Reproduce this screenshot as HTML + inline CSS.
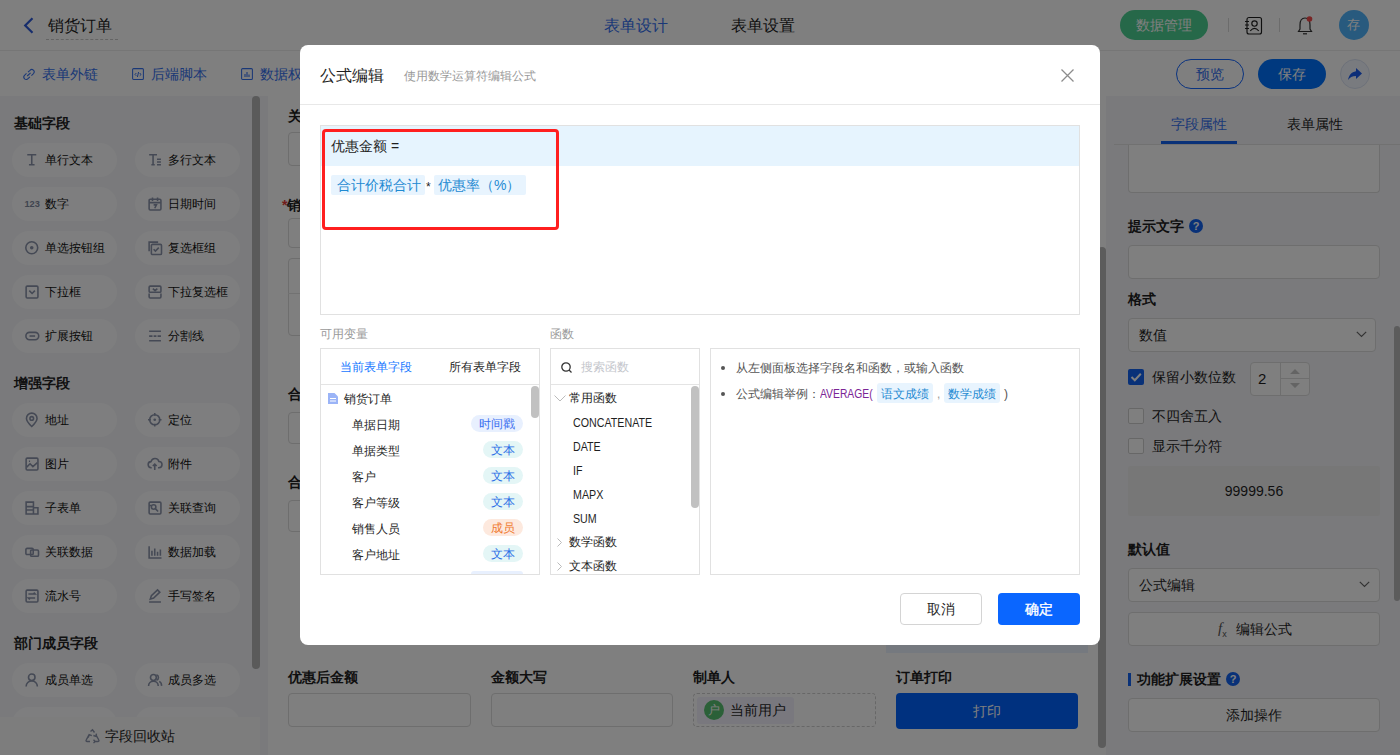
<!DOCTYPE html>
<html><head><meta charset="utf-8">
<style>
*{box-sizing:border-box;margin:0;padding:0}
html,body{width:1400px;height:755px;overflow:hidden}
body{position:relative;font-family:"Liberation Sans",sans-serif;color:#1f1f1f;background:#fff}
.a{position:absolute}
.t{position:absolute;white-space:nowrap}
svg{position:absolute;overflow:visible}
/* background page */
#hdr{left:0;top:0;width:1400px;height:51px;background:#fff;border-bottom:1px solid #ececec}
#tb{left:0;top:51px;width:1400px;height:45px;background:#fff}
#lp{left:0;top:96px;width:268px;height:659px;background:#f4f5f9}
#cv{left:268px;top:96px;width:838px;height:659px;background:#fff}
#rp{left:1106px;top:96px;width:294px;height:659px;background:#f4f5f9}
.pill{position:absolute;width:105px;height:34px;border-radius:17px;background:#fdfdfe}
.pill span{position:absolute;left:33px;top:0;line-height:34px;font-size:12px;color:#111;white-space:nowrap}
.sec{position:absolute;left:14px;font-size:14px;font-weight:bold;color:#222;line-height:20px}
.inp{position:absolute;border:1px solid #dcdcdc;border-radius:4px;background:#fff}
.lbl{position:absolute;font-size:14px;font-weight:bold;color:#1f1f1f;line-height:20px;white-space:nowrap}
#ov{left:0;top:0;width:1400px;height:755px;background:rgba(0,0,0,.5)}
/* modal */
#md{left:300px;top:45px;width:800px;height:600px;background:#fff;border-radius:8px}
.box{position:absolute;border:1px solid #e1e1e1;background:#fff}
.tag{position:absolute;height:17px;line-height:19px;border-radius:9px;font-size:12px;text-align:center}
.fn{transform:scaleX(.89);transform-origin:0 0}
.fr{position:absolute;font-size:12px;color:#1f1f1f;line-height:20px;white-space:nowrap}
</style></head><body>

<!-- ===== BACKGROUND ===== -->
<div id="hdr" class="a"></div>
<svg style="left:23px;top:17px" width="11" height="17" viewBox="0 0 11 17"><path d="M9.5 1.2 L2.2 8.5 L9.5 15.8" fill="none" stroke="#2f5bd8" stroke-width="2.2"/></svg>
<div class="t" style="left:48px;top:15px;font-size:16px;line-height:22px;color:#1f1f1f">销货订单</div>
<div class="a" style="left:46px;top:39px;width:72px;border-top:1px dashed #c8c8c8"></div>
<div class="t" style="left:604px;top:15px;font-size:16px;line-height:22px;color:#3570ee">表单设计</div>
<div class="t" style="left:731px;top:15px;font-size:16px;line-height:22px;color:#1f1f1f">表单设置</div>
<div class="a" style="left:1120px;top:10px;width:88px;height:30px;border-radius:15px;background:#4cd092"></div>
<div class="t" style="left:1136px;top:15px;font-size:14px;line-height:20px;color:#fff">数据管理</div>
<div class="a" style="left:1228px;top:18px;width:1px;height:14px;background:#d8d8d8"></div>
<svg style="left:1244px;top:16px" width="20" height="20" viewBox="0 0 20 20"><rect x="3" y="1.5" width="14.5" height="16.5" rx="2" fill="none" stroke="#1f1f1f" stroke-width="1.15"/><circle cx="10.5" cy="7.5" r="2.7" fill="none" stroke="#1f1f1f" stroke-width="1.15"/><path d="M6.2 15 Q10.5 9.8 14.8 15" fill="none" stroke="#1f1f1f" stroke-width="1.15"/><path d="M1 5.5h4M1 9h4M1 12.5h4" stroke="#1f1f1f" stroke-width="1.1"/></svg>
<div class="a" style="left:1279px;top:18px;width:1px;height:14px;background:#d8d8d8"></div>
<svg style="left:1297px;top:16px" width="17" height="19" viewBox="0 0 17 19"><path d="M8 2 C4 2 3 5 3 9 L3 13 L1.5 15.5 L14.5 15.5 L13 13 L13 9 C13 5 12 2 8 2Z" fill="none" stroke="#333" stroke-width="1.2"/><path d="M6 17.8h4" stroke="#333" stroke-width="1.2"/><circle cx="12.5" cy="3" r="2.8" fill="#f24a4a"/></svg>
<div class="a" style="left:1339px;top:10px;width:30px;height:30px;border-radius:15px;background:#50b4fc"></div>
<div class="t" style="left:1347px;top:15px;font-size:13px;line-height:20px;color:#fff">存</div>
<div id="tb" class="a"></div>
<svg style="left:23px;top:69px" width="12" height="11" viewBox="0 0 12 11"><path d="M5 3.2 L7 1.3 A2.3 2.3 0 0 1 10.5 4.6 L8.4 6.6 M6.9 7.8 L5 9.7 A2.3 2.3 0 0 1 1.5 6.4 L3.5 4.4 M4.2 7 L7.6 3.8" fill="none" stroke="#3570ee" stroke-width="1.05"/></svg>
<div class="t" style="left:42px;top:64px;font-size:14px;line-height:20px;color:#3570ee">表单外链</div>
<svg style="left:132px;top:68px" width="12" height="12" viewBox="0 0 12 12"><rect x="0.6" y="0.6" width="10.8" height="10.8" rx="1" fill="none" stroke="#3570ee" stroke-width="1.05"/><path d="M3 6.5 L4.3 5 M3 6.5 L4.3 7.8 M9 6.5 L7.7 5 M9 6.5 L7.7 7.8 M6.6 4 L5.4 9" fill="none" stroke="#3570ee" stroke-width="1"/></svg>
<div class="t" style="left:151px;top:64px;font-size:14px;line-height:20px;color:#3570ee">后端脚本</div>
<svg style="left:241px;top:68px" width="12" height="12" viewBox="0 0 12 12"><rect x="0.6" y="0.6" width="10.8" height="10.8" rx="1" fill="none" stroke="#3570ee" stroke-width="1.05"/><path d="M4 9V6M6 9V4M8 9V6.5" fill="none" stroke="#3570ee" stroke-width="1.1"/></svg>
<div class="t" style="left:260px;top:64px;font-size:14px;line-height:20px;color:#3570ee">数据权限</div>
<div class="a" style="left:1176px;top:59px;width:68px;height:30px;border-radius:15px;border:1.5px solid #1466ff;background:#fff"></div>
<div class="t" style="left:1196px;top:64px;font-size:14px;line-height:20px;color:#3570ee">预览</div>
<div class="a" style="left:1258px;top:59px;width:68px;height:30px;border-radius:15px;background:#0072ff"></div>
<div class="t" style="left:1278px;top:64px;font-size:14px;line-height:20px;color:#fff">保存</div>
<div class="a" style="left:1340px;top:59px;width:30px;height:30px;border-radius:15px;background:#f2f6ff;border:1px solid #dbe3f3"></div>
<svg style="left:1347px;top:66px" width="16" height="16" viewBox="0 0 16 16"><path d="M9 2 L15 7.5 L9 13 L9 10 C5 10 3 11.5 1 14 C2 9 4.5 6 9 5.2Z" fill="#1a5cf0"/></svg>
<div id="lp" class="a"></div>
<!--LEFT-->
<div class="sec" style="top:113px">基础字段</div>
<div class="pill" style="left:12px;top:143px"><svg style="left:13px;top:10px" width="13.5" height="13.5" viewBox="0 0 12 12"><path d="M2 1.5h8M6 1.5v9M3.5 10.5h5" stroke="#8a93aa" fill="none" stroke-width="1.4"/></svg><span>单行文本</span></div>
<div class="pill" style="left:135px;top:143px"><svg style="left:13px;top:10px" width="13.5" height="13.5" viewBox="0 0 12 12"><path d="M1 1.5h7M4.5 1.5v9M3 10.5h3M8 5.5h3.5M8 8h3.5M8 10.5h3.5" stroke="#8a93aa" fill="none" stroke-width="1.4"/></svg><span>多行文本</span></div>
<div class="pill" style="left:12px;top:187px"><svg style="left:13px;top:10px" width="13.5" height="13.5" viewBox="0 0 12 12"><text x="-0.5" y="9.2" font-size="8.2" font-weight="bold" fill="#7f889f" font-family="Liberation Sans">123</text></svg><span>数字</span></div>
<div class="pill" style="left:135px;top:187px"><svg style="left:13px;top:10px" width="13.5" height="13.5" viewBox="0 0 12 12"><rect x="1" y="2" width="10.5" height="9.5" rx="1" stroke="#8a93aa" fill="none" stroke-width="1.4"/><path d="M1 5h10.5M4 0.5v3M8.5 0.5v3M5 7h2.5L6 10" stroke="#8a93aa" fill="none" stroke-width="1.4"/></svg><span>日期时间</span></div>
<div class="pill" style="left:12px;top:231px"><svg style="left:13px;top:10px" width="13.5" height="13.5" viewBox="0 0 12 12"><circle cx="6" cy="6" r="5.3" stroke="#8a93aa" fill="none" stroke-width="1.4"/><circle cx="6" cy="6" r="1.6" fill="#8a93aa"/></svg><span>单选按钮组</span></div>
<div class="pill" style="left:135px;top:231px"><svg style="left:13px;top:10px" width="13.5" height="13.5" viewBox="0 0 12 12"><path d="M1 9V1h8" stroke="#8a93aa" fill="none" stroke-width="1.4"/><rect x="3" y="3" width="9" height="9" rx="1" stroke="#8a93aa" fill="none" stroke-width="1.4"/><path d="M5 7.3l1.6 1.6 3-3" stroke="#8a93aa" fill="none" stroke-width="1.4"/></svg><span>复选框组</span></div>
<div class="pill" style="left:12px;top:275px"><svg style="left:13px;top:10px" width="13.5" height="13.5" viewBox="0 0 12 12"><rect x="1" y="1" width="10.5" height="10.5" rx="1" stroke="#8a93aa" fill="none" stroke-width="1.4"/><path d="M3.8 5l2.5 2.5 2.5-2.5" stroke="#8a93aa" fill="none" stroke-width="1.4"/></svg><span>下拉框</span></div>
<div class="pill" style="left:135px;top:275px"><svg style="left:13px;top:10px" width="13.5" height="13.5" viewBox="0 0 12 12"><rect x="1" y="1" width="10.5" height="5.5" rx="1" stroke="#8a93aa" fill="none" stroke-width="1.4"/><path d="M1 7.5v3a1 1 0 0 0 1 1h8.5a1 1 0 0 0 1-1v-3M4.3 3.3l2 1.7 2-1.7" stroke="#8a93aa" fill="none" stroke-width="1.4"/></svg><span>下拉复选框</span></div>
<div class="pill" style="left:12px;top:319px"><svg style="left:13px;top:10px" width="13.5" height="13.5" viewBox="0 0 12 12"><rect x="0.8" y="3" width="11.4" height="6.5" rx="3.2" stroke="#8a93aa" fill="none" stroke-width="1.4"/><path d="M4 6.25h5" stroke="#8a93aa" fill="none" stroke-width="1.4"/></svg><span>扩展按钮</span></div>
<div class="pill" style="left:135px;top:319px"><svg style="left:13px;top:10px" width="13.5" height="13.5" viewBox="0 0 12 12"><path d="M1 2h10.5M1 6.3h3M5 6.3h2.5M8.5 6.3h3M1 10.5h10.5" stroke="#8a93aa" fill="none" stroke-width="1.4"/></svg><span>分割线</span></div>
<div class="sec" style="top:373px">增强字段</div>
<div class="pill" style="left:12px;top:403px"><svg style="left:13px;top:10px" width="13.5" height="13.5" viewBox="0 0 12 12"><path d="M6 12C2.5 8.5 1.3 6.5 1.3 4.8a4.7 4.7 0 0 1 9.4 0c0 1.7-1.2 3.7-4.7 7.2Z" stroke="#8a93aa" fill="none" stroke-width="1.4"/><circle cx="6" cy="4.8" r="1.6" stroke="#8a93aa" fill="none" stroke-width="1.4"/></svg><span>地址</span></div>
<div class="pill" style="left:135px;top:403px"><svg style="left:13px;top:10px" width="13.5" height="13.5" viewBox="0 0 12 12"><circle cx="6" cy="6" r="4.5" stroke="#8a93aa" fill="none" stroke-width="1.4"/><circle cx="6" cy="6" r="1.2" fill="#8a93aa"/><path d="M6 0v2.5M6 9.5V12M0 6h2.5M9.5 6H12" stroke="#8a93aa" fill="none" stroke-width="1.4"/></svg><span>定位</span></div>
<div class="pill" style="left:12px;top:447px"><svg style="left:13px;top:10px" width="13.5" height="13.5" viewBox="0 0 12 12"><rect x="1" y="1" width="10.5" height="10.5" rx="1" stroke="#8a93aa" fill="none" stroke-width="1.4"/><path d="M1.5 9l3-3 2.5 2.5L11 5M3.5 3.8h1" stroke="#8a93aa" fill="none" stroke-width="1.4"/></svg><span>图片</span></div>
<div class="pill" style="left:135px;top:447px"><svg style="left:13px;top:10px" width="13.5" height="13.5" viewBox="0 0 12 12"><path d="M3.3 9.5H3a2.7 2.7 0 0 1-.3-5.4A3.6 3.6 0 0 1 9.7 4a2.7 2.7 0 0 1 0 5.5h-.8M6 11.5V6.5M4.3 8 6 6.3 7.7 8" stroke="#8a93aa" fill="none" stroke-width="1.4"/></svg><span>附件</span></div>
<div class="pill" style="left:12px;top:491px"><svg style="left:13px;top:10px" width="13.5" height="13.5" viewBox="0 0 12 12"><path d="M1 1h6.5v10.5H1ZM1 5h6.5M1 8h6.5M7.5 6h4v5.5h-4" stroke="#8a93aa" fill="none" stroke-width="1.4"/></svg><span>子表单</span></div>
<div class="pill" style="left:135px;top:491px"><svg style="left:13px;top:10px" width="13.5" height="13.5" viewBox="0 0 12 12"><rect x="1" y="1" width="10.5" height="10.5" rx="1" stroke="#8a93aa" fill="none" stroke-width="1.4"/><circle cx="5" cy="5.3" r="2" stroke="#8a93aa" fill="none" stroke-width="1.4"/><path d="M6.5 6.8 9 9.3M1 4h2" stroke="#8a93aa" fill="none" stroke-width="1.4"/></svg><span>关联查询</span></div>
<div class="pill" style="left:12px;top:535px"><svg style="left:13px;top:10px" width="13.5" height="13.5" viewBox="0 0 12 12"><rect x="0.8" y="3" width="6.5" height="5.5" rx="1" stroke="#8a93aa" fill="none" stroke-width="1.4"/><rect x="5" y="4.5" width="7" height="5.5" rx="1" stroke="#8a93aa" fill="none" stroke-width="1.4"/></svg><span>关联数据</span></div>
<div class="pill" style="left:135px;top:535px"><svg style="left:13px;top:10px" width="13.5" height="13.5" viewBox="0 0 12 12"><path d="M1 1v10.5h11M3.5 9.5V5M6 9.5V3M8.5 9.5V6M11 9.5V4" stroke="#8a93aa" fill="none" stroke-width="1.4"/></svg><span>数据加载</span></div>
<div class="pill" style="left:12px;top:579px"><svg style="left:13px;top:10px" width="13.5" height="13.5" viewBox="0 0 12 12"><rect x="1" y="1" width="10.5" height="10.5" rx="1" stroke="#8a93aa" fill="none" stroke-width="1.4"/><path d="M3 4.5h6l-1.3-1.3M9 8H3l1.3 1.3" stroke="#8a93aa" fill="none" stroke-width="1.4"/></svg><span>流水号</span></div>
<div class="pill" style="left:135px;top:579px"><svg style="left:13px;top:10px" width="13.5" height="13.5" viewBox="0 0 12 12"><path d="M2 9l1-3L8.5 0.8l2 2L5 8Z M1 11.5h10.5" stroke="#8a93aa" fill="none" stroke-width="1.4"/></svg><span>手写签名</span></div>
<div class="sec" style="top:633px">部门成员字段</div>
<div class="pill" style="left:12px;top:663px"><svg style="left:13px;top:10px" width="13.5" height="13.5" viewBox="0 0 12 12"><circle cx="6" cy="3.8" r="2.9" stroke="#8a93aa" fill="none" stroke-width="1.4"/><path d="M1 12a5 5 0 0 1 10 0" stroke="#8a93aa" fill="none" stroke-width="1.4"/></svg><span>成员单选</span></div>
<div class="pill" style="left:135px;top:663px"><svg style="left:13px;top:10px" width="13.5" height="13.5" viewBox="0 0 12 12"><circle cx="4.8" cy="4" r="2.6" stroke="#8a93aa" fill="none" stroke-width="1.4"/><path d="M0.5 11.5a4.3 4.3 0 0 1 8.6 0M7.5 1.6a2.5 2.5 0 0 1 0 4.8M10 7.5a4 4 0 0 1 2 4" stroke="#8a93aa" fill="none" stroke-width="1.4"/></svg><span>成员多选</span></div>
<div class="pill" style="left:12px;top:707px"><span></span></div>
<div class="pill" style="left:135px;top:707px"><span></span></div>
<div class="a" style="left:252px;top:96px;width:8px;height:573px;border-radius:4px;background:#b4b4b4"></div>
<div class="a" style="left:0;top:717px;width:260px;height:38px;background:#fafafa"></div>
<svg style="left:85px;top:729px" width="15" height="14" viewBox="0 0 15 14"><path d="M5.5 2.5 7.5 0.8 9.5 3.5M10.8 5.5 13.8 11a1 1 0 0 1-.9 1.5H9.5M5 12.5H2.1a1 1 0 0 1-.9-1.5L4 5.8M3.2 8.5l1-2.8 2.6 1M8.5 10.8l1.7 1.7-1.7 1.5M11.5 4.6l-.6 2.7-2.5-.8" stroke="#8a93aa" fill="none" stroke-width="1.4"/></svg>
<div class="t" style="left:105px;top:726px;font-size:14px;line-height:20px;color:#1f1f1f">字段回收站</div>
<!--/LEFT-->
<div id="cv" class="a"></div>
<!--CANVAS-->
<div class="lbl" style="left:288px;top:106px">关联字段</div>
<div class="inp" style="left:288px;top:132px;width:300px;height:34px"></div>
<div class="lbl" style="left:282px;top:195px"><span style="color:#e53935">*</span>销售类型</div>
<div class="inp" style="left:288px;top:218px;width:300px;height:30px"></div>
<div class="inp" style="left:288px;top:258px;width:300px;height:78px"></div>
<div class="a" style="left:288px;top:293px;width:300px;height:1px;background:#e4e4e4"></div>
<div class="lbl" style="left:288px;top:384px">合计金额</div>
<div class="inp" style="left:288px;top:412px;width:300px;height:32px"></div>
<div class="lbl" style="left:288px;top:472px">合计税额</div>
<div class="inp" style="left:288px;top:500px;width:300px;height:32px"></div>
<div class="a" style="left:886px;top:560px;width:202px;height:93px;background:#eaf3ff"></div>
<div class="lbl" style="left:288px;top:667px">优惠后金额</div>
<div class="inp" style="left:288px;top:693px;width:183px;height:34px"></div>
<div class="lbl" style="left:491px;top:667px">金额大写</div>
<div class="inp" style="left:491px;top:693px;width:182px;height:34px"></div>
<div class="lbl" style="left:693px;top:667px">制单人</div>
<div class="a" style="left:693px;top:693px;width:183px;height:34px;border:1px dashed #cfcfcf;border-radius:4px"></div>
<div class="a" style="left:697px;top:697px;width:97px;height:27px;background:#f3f1fc;border-radius:3px"></div>
<div class="a" style="left:704px;top:700px;width:20px;height:20px;border-radius:10px;background:#56c070"></div>
<div class="t" style="left:708px;top:701px;font-size:12px;line-height:18px;color:#fff">户</div>
<div class="t" style="left:730px;top:700px;font-size:14px;line-height:20px;color:#1f1f1f">当前用户</div>
<div class="lbl" style="left:896px;top:667px">订单打印</div>
<div class="a" style="left:896px;top:693px;width:182px;height:36px;border-radius:4px;background:#0062fe"></div>
<div class="t" style="left:973px;top:701px;font-size:14px;line-height:20px;color:#fff">打印</div>
<div class="a" style="left:1098px;top:247px;width:8px;height:501px;border-radius:4px;background:#b8b8b8"></div>
<div id="rp" class="a"></div>
<!--RIGHT-->
<div class="inp" style="left:1128px;top:130px;width:252px;height:63px;border-top:none;border-radius:0 0 4px 4px"></div>
<div class="a" style="left:1106px;top:96px;width:294px;height:48px;background:#f4f5f9"></div>
<div class="a" style="left:1114px;top:144px;width:286px;height:1px;background:#e3e3e3"></div>
<div class="a" style="left:1161px;top:141px;width:76px;height:3px;background:#1262f0"></div>
<div class="t" style="left:1171px;top:114px;font-size:14px;line-height:20px;color:#3570ee">字段属性</div>
<div class="t" style="left:1287px;top:114px;font-size:14px;line-height:20px;color:#1f1f1f">表单属性</div>
<div class="lbl" style="left:1128px;top:216px">提示文字</div>
<div class="a" style="left:1189px;top:219px;width:14px;height:14px;border-radius:7px;background:#1262f0;color:#fff;font-size:11px;font-weight:bold;line-height:14px;text-align:center">?</div>
<div class="inp" style="left:1128px;top:245px;width:252px;height:34px"></div>
<div class="lbl" style="left:1128px;top:289px">格式</div>
<div class="inp" style="left:1128px;top:318px;width:248px;height:34px"></div>
<div class="t" style="left:1139px;top:325px;font-size:14px;line-height:20px;color:#1f1f1f">数值</div>
<svg style="left:1356px;top:331px" width="11" height="7" viewBox="0 0 11 7"><path d="M0.8 0.8 5.5 5.5 10.2 0.8" fill="none" stroke="#666" stroke-width="1.2"/></svg>
<div class="a" style="left:1128px;top:369px;width:16px;height:16px;border-radius:2px;background:#1262f0"></div>
<svg style="left:1128px;top:369px" width="16" height="16" viewBox="0 0 16 16"><path d="M3.5 8 6.8 11.2 12.8 4.8" fill="none" stroke="#fff" stroke-width="2"/></svg>
<div class="t" style="left:1152px;top:367px;font-size:14px;line-height:20px;color:#1f1f1f">保留小数位数</div>
<div class="inp" style="left:1250px;top:362px;width:60px;height:34px"></div>
<div class="a" style="left:1280px;top:363px;width:1px;height:32px;background:#dcdcdc"></div>
<div class="a" style="left:1281px;top:378px;width:28px;height:1px;background:#dcdcdc"></div>
<svg style="left:1288px;top:366px" width="14" height="26" viewBox="0 0 14 26"><path d="M2 8 7 3 12 8Z M2 17 7 22 12 17Z" fill="#c8c8c8"/></svg>
<div class="t" style="left:1258px;top:369px;font-size:15px;line-height:20px;color:#1f1f1f">2</div>
<div class="a" style="left:1128px;top:408px;width:16px;height:16px;border-radius:2px;border:1px solid #cfcfcf;background:#fff"></div>
<div class="t" style="left:1152px;top:406px;font-size:14px;line-height:20px;color:#1f1f1f">不四舍五入</div>
<div class="a" style="left:1128px;top:438px;width:16px;height:16px;border-radius:2px;border:1px solid #cfcfcf;background:#fff"></div>
<div class="t" style="left:1152px;top:436px;font-size:14px;line-height:20px;color:#1f1f1f">显示千分符</div>
<div class="a" style="left:1128px;top:466px;width:252px;height:50px;background:#efefef;border-radius:2px"></div>
<div class="t" style="left:1128px;top:481px;width:252px;text-align:center;font-size:14px;line-height:20px;color:#1f1f1f">99999.56</div>
<div class="lbl" style="left:1128px;top:539px">默认值</div>
<div class="inp" style="left:1128px;top:568px;width:252px;height:34px"></div>
<div class="t" style="left:1139px;top:575px;font-size:14px;line-height:20px;color:#1f1f1f">公式编辑</div>
<svg style="left:1359px;top:581px" width="11" height="7" viewBox="0 0 11 7"><path d="M0.8 0.8 5.5 5.5 10.2 0.8" fill="none" stroke="#666" stroke-width="1.2"/></svg>
<div class="inp" style="left:1128px;top:612px;width:252px;height:34px"></div>
<div class="t" style="left:1218px;top:617px;font-size:15px;line-height:22px;color:#555;font-family:'Liberation Serif',serif;font-style:italic">f<sub style="font-size:9px;font-style:normal;font-family:'Liberation Sans'">x</sub></div>
<div class="t" style="left:1236px;top:619px;font-size:14px;line-height:20px;color:#1f1f1f">编辑公式</div>
<div class="a" style="left:1128px;top:673px;width:3px;height:13px;background:#1262f0"></div>
<div class="lbl" style="left:1137px;top:669px">功能扩展设置</div>
<div class="a" style="left:1226px;top:672px;width:14px;height:14px;border-radius:7px;background:#1262f0;color:#fff;font-size:11px;font-weight:bold;line-height:14px;text-align:center">?</div>
<div class="inp" style="left:1128px;top:698px;width:252px;height:34px"></div>
<div class="t" style="left:1226px;top:705px;font-size:14px;line-height:20px;color:#1f1f1f">添加操作</div>
<div class="a" style="left:1394px;top:326px;width:6px;height:275px;border-radius:3px;background:#b8b8b8"></div>

<!-- ===== OVERLAY ===== -->
<div id="ov" class="a"></div>

<!-- ===== MODAL ===== -->
<div id="md" class="a"></div>
<div class="t" style="left:320px;top:65px;font-size:16px;line-height:22px;color:#1f1f1f">公式编辑</div>
<div class="t" style="left:404px;top:67px;font-size:12px;line-height:18px;color:#999">使用数学运算符编辑公式</div>
<svg style="left:1061px;top:69px" width="13" height="13" viewBox="0 0 13 13"><path d="M0.5 0.5 12.5 12.5M12.5 0.5 0.5 12.5" stroke="#8c8c8c" stroke-width="1.3"/></svg>
<div class="a" style="left:300px;top:104px;width:800px;height:1px;background:#e8e8e8"></div>
<!-- formula box -->
<div class="box" style="left:320px;top:125px;width:760px;height:190px"></div>
<div class="a" style="left:321px;top:126px;width:758px;height:40px;background:#e6f4fe"></div>
<div class="t" style="left:331px;top:136px;font-size:14px;line-height:20px;color:#1f1f1f">优惠金额 =</div>
<div class="a" style="left:331px;top:175px;width:94px;height:20px;background:#e8f4fe;border-radius:2px"></div>
<div class="t" style="left:337px;top:175px;font-size:14px;line-height:20px;color:#1f8ad2">合计价税合计</div>
<div class="t" style="left:426px;top:177px;font-size:12px;line-height:20px;color:#1f1f1f">*</div>
<div class="a" style="left:434px;top:175px;width:92px;height:20px;background:#e8f4fe;border-radius:2px"></div>
<div class="t" style="left:438px;top:175px;font-size:14px;line-height:20px;color:#1f8ad2">优惠率（%）</div>
<div class="a" style="left:322px;top:129px;width:237px;height:101px;border:3px solid #ff1f1f;border-radius:4px"></div>
<!-- labels -->
<div class="t" style="left:320px;top:325px;font-size:12px;line-height:18px;color:#999">可用变量</div>
<div class="t" style="left:550px;top:325px;font-size:12px;line-height:18px;color:#999">函数</div>
<!-- var panel -->
<div class="box" style="left:320px;top:348px;width:220px;height:227px"></div>
<div class="a" style="left:321px;top:384px;width:218px;height:1px;background:#e4e4e4"></div>
<div class="t" style="left:321px;top:358px;width:109px;text-align:center;font-size:12px;line-height:18px;color:#1677ff">当前表单字段</div>
<div class="t" style="left:430px;top:358px;width:109px;text-align:center;font-size:12px;line-height:18px;color:#1f1f1f">所有表单字段</div>
<svg style="left:328px;top:393px" width="10" height="11" viewBox="0 0 10 11"><path d="M0 0h6.5L10 3.5V11H0Z" fill="#9bb4f7"/><path d="M2 5.5h6M2 8h6" stroke="#fff" stroke-width="1"/></svg>
<div class="fr" style="left:344px;top:389px">销货订单</div>
<div class="fr" style="left:352px;top:415px">单据日期</div>
<div class="tag" style="left:471px;top:415px;width:52px;background:#e8f0fe;color:#3a6ff0">时间戳</div>
<div class="fr" style="left:352px;top:441px">单据类型</div>
<div class="tag" style="left:483px;top:441px;width:40px;background:#e4f6f6;color:#2b6fe6">文本</div>
<div class="fr" style="left:352px;top:467px">客户</div>
<div class="tag" style="left:483px;top:467px;width:40px;background:#e4f6f6;color:#2b6fe6">文本</div>
<div class="fr" style="left:352px;top:493px">客户等级</div>
<div class="tag" style="left:483px;top:493px;width:40px;background:#e4f6f6;color:#2b6fe6">文本</div>
<div class="fr" style="left:352px;top:519px">销售人员</div>
<div class="tag" style="left:483px;top:519px;width:40px;background:#fde9de;color:#f07a2e">成员</div>
<div class="fr" style="left:352px;top:545px">客户地址</div>
<div class="tag" style="left:483px;top:545px;width:40px;background:#e4f6f6;color:#2b6fe6">文本</div>
<div class="a" style="left:471px;top:571px;width:52px;height:3px;background:#e8f0fe;border-radius:9px 9px 0 0"></div>
<div class="a" style="left:531px;top:386px;width:8px;height:32px;border-radius:4px;background:#c1c1c1"></div>
<!-- func panel -->
<div class="box" style="left:550px;top:348px;width:150px;height:227px"></div>
<div class="a" style="left:551px;top:384px;width:148px;height:1px;background:#e4e4e4"></div>
<svg style="left:561px;top:362px" width="12" height="11" viewBox="0 0 12 11"><circle cx="5" cy="5" r="4.2" fill="none" stroke="#333" stroke-width="1.3"/><path d="M8 8 10.5 10.5" stroke="#333" stroke-width="1.3"/></svg>
<div class="t" style="left:581px;top:358px;font-size:12px;line-height:18px;color:#c4c6cc">搜索函数</div>
<svg style="left:554px;top:395px" width="12" height="7" viewBox="0 0 12 7"><path d="M0.5 0.5 6 6 11.5 0.5" fill="none" stroke="#bbb" stroke-width="1"/></svg>
<div class="fr" style="left:569px;top:388px">常用函数</div>
<div class="fr fn" style="left:573px;top:413px">CONCATENATE</div>
<div class="fr fn" style="left:573px;top:437px">DATE</div>
<div class="fr fn" style="left:573px;top:461px">IF</div>
<div class="fr fn" style="left:573px;top:485px">MAPX</div>
<div class="fr fn" style="left:573px;top:509px">SUM</div>
<svg style="left:557px;top:538px" width="5" height="9" viewBox="0 0 5 9"><path d="M0.5 0.5 4.5 4.5 0.5 8.5" fill="none" stroke="#bbb" stroke-width="1"/></svg>
<div class="fr" style="left:569px;top:532px">数学函数</div>
<svg style="left:557px;top:562px" width="5" height="9" viewBox="0 0 5 9"><path d="M0.5 0.5 4.5 4.5 0.5 8.5" fill="none" stroke="#bbb" stroke-width="1"/></svg>
<div class="fr" style="left:569px;top:556px">文本函数</div>
<div class="a" style="left:691px;top:386px;width:8px;height:122px;border-radius:4px;background:#c1c1c1"></div>
<!-- info panel -->
<div class="box" style="left:710px;top:348px;width:370px;height:227px"></div>
<div class="a" style="left:721px;top:366px;width:4px;height:4px;border-radius:2px;background:#555"></div>
<div class="fr" style="left:736px;top:358px;color:#555">从左侧面板选择字段名和函数，或输入函数</div>
<div class="a" style="left:721px;top:392px;width:4px;height:4px;border-radius:2px;background:#555"></div>
<div class="fr" style="left:736px;top:384px;color:#555">公式编辑举例：</div>
<div class="fr" style="left:820px;top:384px;color:#7b2596;transform:scaleX(.86);transform-origin:0 0">AVERAGE(</div>
<div class="a" style="left:877px;top:383px;width:56px;height:20px;background:#e8f4fe;border-radius:3px"></div>
<div class="fr" style="left:881px;top:384px;color:#1f8ad2">语文成绩</div>
<div class="fr" style="left:937px;top:384px;color:#999">,</div>
<div class="a" style="left:944px;top:383px;width:56px;height:20px;background:#e8f4fe;border-radius:3px"></div>
<div class="fr" style="left:948px;top:384px;color:#1f8ad2">数学成绩</div>
<div class="fr" style="left:1004px;top:384px;color:#555">)</div>
<!-- footer -->
<div class="a" style="left:900px;top:593px;width:82px;height:32px;border:1px solid #d4d4d4;border-radius:4px;background:#fff"></div>
<div class="t" style="left:927px;top:599px;font-size:14px;line-height:20px;color:#1f1f1f">取消</div>
<div class="a" style="left:998px;top:593px;width:82px;height:32px;border-radius:4px;background:#0a66ff"></div>
<div class="t" style="left:1025px;top:599px;font-size:14px;line-height:20px;color:#fff;-webkit-text-stroke:0.35px #fff">确定</div>

</body></html>
